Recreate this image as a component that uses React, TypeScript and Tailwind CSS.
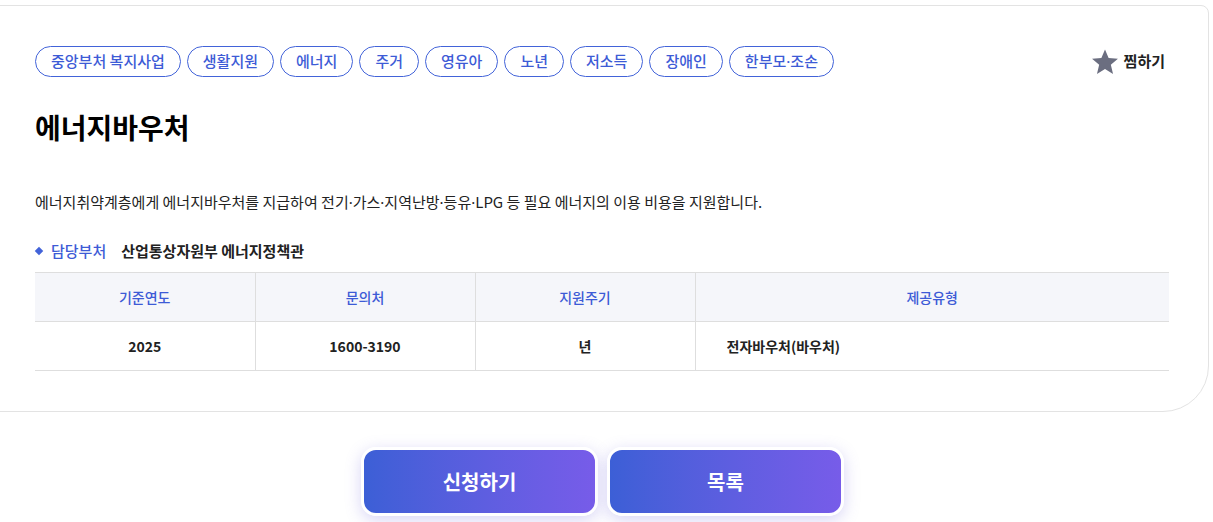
import React from 'react';

const tags = ['중앙부처 복지사업', '생활지원', '에너지', '주거', '영유아', '노년', '저소득', '장애인', '한부모·조손'];

// the middle dot is full-width in the CJK font, so take it from a Latin face
const withDots = (s: string) =>
  s.split('·').map((part, i) => (
    <React.Fragment key={i}>
      {i > 0 && <span className="font-['Noto_Sans',sans-serif]">·</span>}
      {part}
    </React.Fragment>
  ));

const App = () => {
  return (
    <div className="w-[1213px] h-[522px] bg-white overflow-hidden font-['Noto_Sans_CJK_KR','Noto_Sans',sans-serif] text-[#222]">
      <div className="pt-[5px] pr-[4px]">
        <div className="-ml-[20px] border border-[#e3e3e3] rounded-tr-[8px] rounded-br-[46px] pl-[54px] pr-[39px] pt-[40px] pb-[40px] bg-white">
          <div className="flex items-center justify-between">
            <div className="flex gap-[6px]">
              {tags.map((t) => (
                <span
                  key={t}
                  className="h-[31px] px-[15px] flex items-center rounded-full border border-[#4263d9] text-[#3d5bd6] text-[15px] font-medium"
                >
                  {withDots(t)}
                </span>
              ))}
            </div>
            <button className="flex items-center gap-[5px] mr-[4px] text-[15px] font-bold text-[#222]">
              <svg width="28" height="28" viewBox="0 0 24 24">
                <path d="M12 1.2l3.1 7.4 8 .6-6.1 5.2 1.9 7.8L12 18l-6.9 4.2 1.9-7.8-6.1-5.2 8-.6z" fill="#6b6e80" />
              </svg>
              찜하기
            </button>
          </div>

          <h1 className="mt-[30px] text-[28px] leading-[40px] font-bold text-black">에너지바우처</h1>

          <p className="mt-[44px] text-[15px] leading-[22px] text-[#222]">
            {withDots('에너지취약계층에게 에너지바우처를 지급하여 전기·가스·지역난방·등유·LPG 등 필요 에너지의 이용 비용을 지원합니다.')}
          </p>

          <div className="mt-[27px] flex items-center h-[22px] text-[15px]">
            <span className="w-[6px] h-[6px] bg-[#4263d9] rotate-45 ml-[1px] mr-[9px]"></span>
            <span className="text-[#3d5bd6] font-medium">담당부처</span>
            <span className="ml-[15px] font-bold text-[#222]">산업통상자원부 에너지정책관</span>
          </div>

          <table className="mt-[10px] w-full border-collapse text-[14px]">
            <thead>
              <tr className="bg-[#f5f6fa] border-t border-b border-[#dedede]">
                <th className="w-[220px] h-[49px] font-medium text-[#3d5bd6] border-r border-[#dedede]">기준연도</th>
                <th className="w-[220px] font-medium text-[#3d5bd6] border-r border-[#dedede]">문의처</th>
                <th className="w-[220px] font-medium text-[#3d5bd6] border-r border-[#dedede]">지원주기</th>
                <th className="font-medium text-[#3d5bd6]">제공유형</th>
              </tr>
            </thead>
            <tbody>
              <tr className="border-b border-[#dedede]">
                <td className="h-[49px] text-center font-bold border-r border-[#dedede]">2025</td>
                <td className="text-center font-bold border-r border-[#dedede]">1600-3190</td>
                <td className="text-center font-bold border-r border-[#dedede]">년</td>
                <td className="pl-[31px] font-bold">전자바우처(바우처)</td>
              </tr>
            </tbody>
          </table>
        </div>
      </div>

      <div className="mt-[35px] flex justify-center gap-[9px] pr-[8px]">
        <button className="w-[237px] h-[69px] rounded-[15px] border-[3px] border-white bg-gradient-to-r from-[#3c5fd6] to-[#775ce9] text-white text-[20px] font-bold shadow-[0_4px_16px_rgba(110,100,220,0.28)]">
          신청하기
        </button>
        <button className="w-[237px] h-[69px] rounded-[15px] border-[3px] border-white bg-gradient-to-r from-[#3c5fd6] to-[#775ce9] text-white text-[20px] font-bold shadow-[0_4px_16px_rgba(110,100,220,0.28)]">
          목록
        </button>
      </div>
    </div>
  );
};

export default App;
